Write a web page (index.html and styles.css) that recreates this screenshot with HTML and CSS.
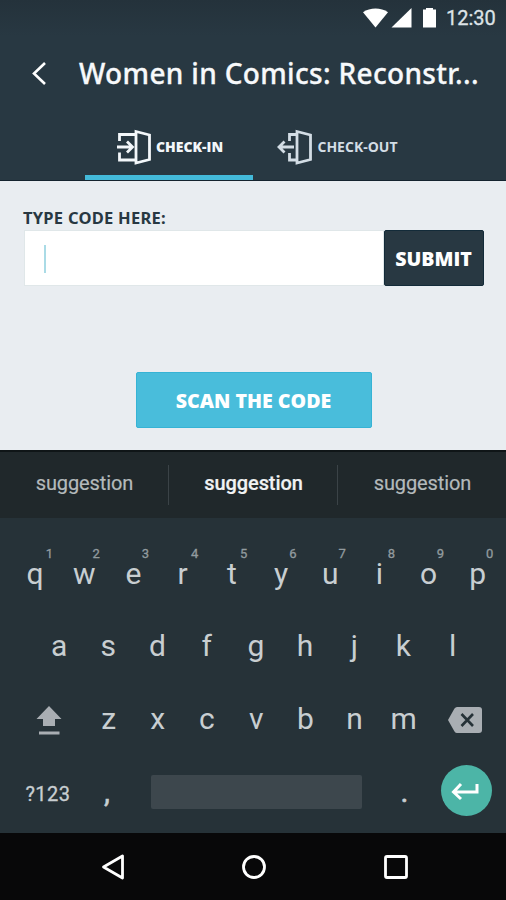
FILE: index.html
```html
<!DOCTYPE html>
<html lang="en">
<head>
<meta charset="utf-8">
<title>Check-in</title>
<link rel="stylesheet" href="styles.css">
</head>
<body>
<div class="phone">
  <header class="header">
    <div class="status">
      <svg class="status-icons" width="76" height="22" viewBox="0 0 76 22">
        <path d="M1 4.2C8 -.6 19 -.6 26 4.2L13.500 19.500Z"/>
        <path d="M49.500 0V19.500H29.500Z"/>
        <path d="M61 1.500h3V0h7v1.500h3V19.500H61Z"/>
      </svg>
      <span class="clock">12:30</span>
    </div>
    <div class="title-bar">
      <svg class="back" width="16" height="26" viewBox="0 0 16 26"><path d="M14 2L3 12.500L14 23"/></svg>
      <h1 class="title">Women in Comics: Reconstr...</h1>
    </div>
    <nav class="tabs">
      <a class="tab active">
        <svg class="door" width="36" height="36" viewBox="0 0 36 36"><path d="M20 5.500H3.500V12M3.500 23.500V31H20M20 2.500L33.500 6V30.500L20 34ZM1 18H16M11 12.500L16.500 18L11 23.500"/></svg>
        <span>CHECK-IN</span>
      </a>
      <a class="tab">
        <svg class="door" width="36" height="36" viewBox="0 0 36 36"><path d="M20 5.500H12.500V12M12.500 24V31H20M20 2.500L33.500 6V30.500L20 34ZM17 18H2M7.500 12.500L2 18L7.500 23.500"/></svg>
        <span>CHECK-OUT</span>
      </a>
    </nav>
  </header>
  <main class="content">
    <label class="label">TYPE CODE HERE:</label>
    <div class="field">
      <div class="input"><span class="caret"></span></div>
      <button class="submit">SUBMIT</button>
    </div>
    <button class="scan">SCAN THE CODE</button>
  </main>
  <section class="suggestions">
    <span>suggestion</span><span class="main">suggestion</span><span>suggestion</span>
  </section>
  <section class="keyboard">
    <div class="row top">
      <span>q<sup>1</sup></span><span>w<sup>2</sup></span><span>e<sup>3</sup></span><span>r<sup>4</sup></span><span>t<sup>5</sup></span><span>y<sup>6</sup></span><span>u<sup>7</sup></span><span>i<sup>8</sup></span><span>o<sup>9</sup></span><span>p<sup>0</sup></span>
    </div>
    <div class="row home">
      <span>a</span><span>s</span><span>d</span><span>f</span><span>g</span><span>h</span><span>j</span><span>k</span><span>l</span>
    </div>
    <div class="row lower">
      <svg class="shift" width="26" height="30" viewBox="0 0 26 30"><path d="M13 0L25.500 13H19V20H7V13H.5ZM3 25.500H23.500V28.500H3Z"/></svg>
      <span>z</span><span>x</span><span>c</span><span>v</span><span>b</span><span>n</span><span>m</span>
      <svg class="erase" width="36" height="28" viewBox="0 0 36 28"><path class="body" d="M10 1H32Q35 1 35 4V24Q35 27 32 27H10Q8.500 27 7.500 25.500L1 14L7.500 2.500Q8.500 1 10 1Z"/><path class="cross" d="M14.500 8L26 20M26 8L14.500 20"/></svg>
    </div>
    <div class="row bottom">
      <span class="symbols">?123</span>
      <span class="comma">,</span>
      <span class="space"></span>
      <span class="dot">.</span>
      <span class="enter"><svg width="28" height="20" viewBox="0 0 28 20"><path d="M26 3V11H3M10 3L2.500 11L10 18"/></svg></span>
    </div>
  </section>
  <footer class="nav">
    <svg width="24" height="28" viewBox="0 0 24 28"><path d="M21.500 3V25L2.500 14Z"/></svg>
    <svg width="26" height="28" viewBox="0 0 26 28"><circle cx="13" cy="14" r="10.500"/></svg>
    <svg width="26" height="28" viewBox="0 0 26 28"><rect x="2.500" y="3.500" width="21" height="21" rx="1.500"/></svg>
  </footer>
</div>
</body>
</html>
```
FILE: styles.css
```css
* { box-sizing: border-box; }
body { margin: 0; background: #080809; }
.phone { width: 506px; height: 900px; display: flex; flex-direction: column; font-family: Roboto, sans-serif; overflow: hidden; }
button { border: 0; padding: 0; font-family: "Open Sans", sans-serif; font-weight: 800; color: #fff; white-space: nowrap; }

.header { height: 181px; background: #283842; border-bottom: 1px solid #14232f; display: flex; flex-direction: column; flex: none; }
.status { height: 36px; display: flex; align-items: flex-start; justify-content: flex-end; padding: 8px 11px 0 0; background: linear-gradient(#24323b, #283842); }
.status-icons { fill: #fff; margin-right: 8px; }
.clock { font-size: 20px; line-height: 20px; color: #dde3e7; width: 49px; white-space: nowrap; -webkit-text-stroke: .3px; }
.title-bar { height: 75px; display: flex; align-items: center; padding-left: 31px; }
.back { fill: none; stroke: #fff; stroke-width: 2.6; }
.title { margin: 0 0 2px 32px; font: 500 28px/36px "Noto Sans", sans-serif; letter-spacing: .33px; color: #f7f9fb; white-space: nowrap; -webkit-text-stroke: .3px; }
.tabs { display: flex; height: 69px; padding-left: 85px; }
.tab { width: 168px; display: flex; align-items: center; justify-content: center; gap: 4px; border-bottom: 5px solid transparent; padding: 7px 0 0 1px; color: #d3dde5; font: 700 14px/20px "Open Sans", sans-serif; white-space: nowrap; }
.tab.active { border-color: #43b9d9; color: #f3f7fa; font-weight: 800; }
.door { fill: none; stroke: currentColor; stroke-width: 2.8; flex: none; }

.content { height: 269px; flex: none; background: #e9edf1; padding: 25px 22px 0 24px; display: flex; flex-direction: column; }
.label { font: 700 16.500px/24px "Noto Sans", sans-serif; letter-spacing: .25px; margin-left: -1px; color: #283842; height: 24px; }
.field { display: flex; height: 56px; }
.input { flex: 1; background: #fff; border: 1px solid #e0e7e9; padding: 14px 0 0 19px; }
.caret { display: block; width: 2px; height: 28px; background: #aadbe6; }
.submit { width: 100px; background: #283842; border: 1px solid #132b39; border-radius: 2px; font-size: 19.600px; padding: 1px 1px 0 0; }
.scan { width: 236px; height: 56px; margin: 86px 0 0 111.500px; background: #49bddb; border: 1px solid #36b3d5; border-radius: 2px; font-size: 19.600px; padding-top: 1px; }

.suggestions { height: 68px; flex: none; background: #20282b; border-top: 2px solid #0f1517; display: flex; align-items: center; }
.suggestions span { flex: 1; height: 40px; line-height: 36px; text-align: center; font-size: 20px; letter-spacing: -.1px; padding-left: 1px; color: #b4babc; -webkit-text-stroke: .2px; }
.suggestions .main { color: #f0f2f3; font-weight: 500; border: solid #3b4347; border-width: 0 1px; }

.keyboard { height: 315px; flex: none; background: #263238; padding-top: 38px; color: #c8ced1; }
.row { display: flex; height: 73px; font-size: 30px; line-height: 36px; }
.row > span { width: 49.2px; flex: none; text-align: center; position: relative; }
.top { padding-left: 10.500px; height: 72px; }
.top sup { position: absolute; left: 34px; top: -10px; width: 10px; font-size: 13px; line-height: 16px; color: #929b9f; -webkit-text-stroke: .3px; }
.top span:nth-child(n+2) sup { left: 31.500px; }
.home { padding-left: 34.500px; }
.lower { padding-left: 36px; }
.shift { fill: #a9aeb3; margin: 5px 22px 0 0; flex: none; }
.erase { margin: 5px 0 0 19px; flex: none; }
.erase .body { fill: #a9aeb3; }
.erase .cross { stroke: #263238; stroke-width: 2.6; }
.row.bottom { padding-left: 25px; }
.bottom .symbols { width: 46px; font-size: 20px; line-height: 40px; letter-spacing: .5px; white-space: nowrap; -webkit-text-stroke: .3px; }
.bottom .comma { width: 72px; -webkit-text-stroke: .5px; }
.bottom .space { width: 211px; height: 34px; margin: 1px 0 0 8px; background: #3d474d; border-radius: 2px; }
.bottom .dot { width: 79px; padding-left: 6px; -webkit-text-stroke: .6px; }
.bottom .enter { width: 51px; height: 51px; margin: -9px 0 0 -.5px; background: #4cb5a7; border-radius: 50%; display: flex; align-items: center; justify-content: center; }
.enter svg { fill: none; stroke: #fff; stroke-width: 3; margin-right: 2px; }

.nav { height: 67px; background: #080809; display: flex; justify-content: center; align-items: center; gap: 116px; padding-left: 3px; }
.nav svg { fill: none; stroke: #fff; stroke-width: 2.8; stroke-linejoin: round; }
```
